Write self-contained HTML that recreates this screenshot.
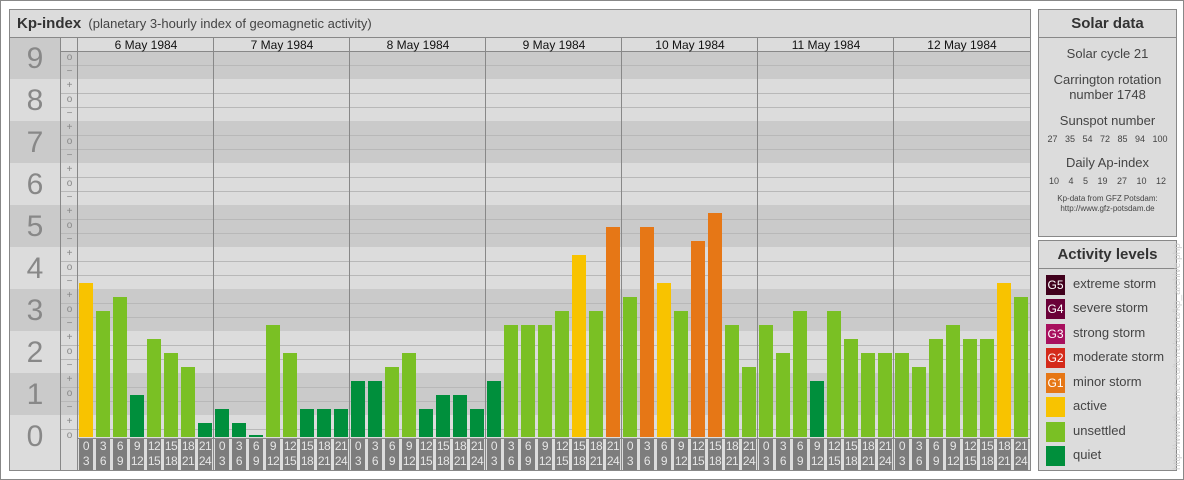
<!DOCTYPE html>
<html><head><meta charset="utf-8"><style>
body{margin:0;width:1184px;height:480px;background:#fff;font-family:"Liberation Sans",sans-serif;position:relative;overflow:hidden}
.a{position:absolute}
#frame{left:0;top:0;width:1182px;height:478px;border:1px solid #888;background:#fff}
#main{left:9px;top:9px;width:1020px;height:460px;border:1px solid #888;background:#dcdcdc;overflow:hidden}
.ttl{left:0;top:0;width:1020px;height:27px;border-bottom:1px solid #888;font-size:13px;color:#444;line-height:27px;background:#dcdcdc}
.lbl{font-size:13px;color:#888;left:0;width:50px;text-align:center;font-size:30px;line-height:42px}
.tk{left:51px;width:17px;text-align:center;font-size:10px;color:#888;line-height:14px;height:14px}
.dh{top:28px;height:14px;width:136px;text-align:center;font-size:12px;color:#111;line-height:14px}
.bx{top:429px;width:14px;height:31px;background:#7d7d7d;color:#e6e6e6;font-size:12px;line-height:15px;text-align:center;overflow:hidden;letter-spacing:-0.5px}
.panel{border:1px solid #888;background:#dcdcdc;left:1038px;width:137px}
.ph{height:27px;border-bottom:1px solid #888;text-align:center;font-weight:bold;font-size:15px;line-height:27px;color:#333}
.pt{text-align:center;color:#444;font-size:13px;white-space:nowrap}
.lv{left:7px;font-size:13px;color:#444;height:22px;line-height:22px}
.lv span{display:inline-block;width:19px;height:20px;vertical-align:middle;margin-right:8px;color:#fff;font-size:12px;text-align:center;line-height:20px}
</style></head><body>
<div class="a" id="frame"></div>
<div class="a" id="main">
<div id="bg"></div>
<div class="a ttl"><b style="font-size:15px;color:#333;margin-left:7px">Kp-index</b>&nbsp;&nbsp;<span style="font-size:13px">(planetary 3-hourly index of geomagnetic activity)</span></div>
<div class="a" style="left:51px;top:28px;width:969px;height:14px;background:#dcdcdc"></div>
<div class="a" style="left:51px;top:429px;width:969px;height:31px;background:#dcdcdc"></div>
<div class="a" style="left:50px;top:28px;width:1px;height:432px;background:#888"></div>
<div class="a" style="left:67px;top:28px;width:1px;height:432px;background:#888"></div>
<div class="a" style="left:51px;top:41px;width:969px;height:1px;background:#888"></div>
<div class="a lbl" style="top:28px">9</div><div class="a lbl" style="top:70px">8</div><div class="a lbl" style="top:112px">7</div><div class="a lbl" style="top:154px">6</div><div class="a lbl" style="top:196px">5</div><div class="a lbl" style="top:238px">4</div><div class="a lbl" style="top:280px">3</div><div class="a lbl" style="top:322px">2</div><div class="a lbl" style="top:364px">1</div><div class="a lbl" style="top:406px">0</div>
<div class="a dh" style="left:68px">6 May 1984</div><div class="a dh" style="left:204px">7 May 1984</div><div class="a dh" style="left:340px">8 May 1984</div><div class="a dh" style="left:476px">9 May 1984</div><div class="a dh" style="left:612px">10 May 1984</div><div class="a dh" style="left:748px">11 May 1984</div><div class="a dh" style="left:884px">12 May 1984</div>
<div id="bars"></div>
</div>
<div class="a panel" style="top:9px;height:226px">
<div class="ph">Solar data</div>
<div class="pt" style="margin-top:8px">Solar cycle 21</div>
<div class="pt" style="margin-top:11px;line-height:15px">Carrington rotation<br>number 1748</div>
<div class="pt" style="margin-top:11px">Sunspot number</div>
<div class="pt" style="font-size:9px;margin-top:6px;word-spacing:5px">27 35 54 72 85 94 100</div>
<div class="pt" style="margin-top:11px">Daily Ap-index</div>
<div class="pt" style="font-size:9px;margin-top:6px;word-spacing:7px">10 4 5 19 27 10 12</div>
<div class="pt" style="font-size:8px;margin-top:8px;line-height:10px">Kp-data from GFZ Potsdam:<br>http://www.gfz-potsdam.de</div>
</div>
<div class="a panel" style="top:240px;height:229px">
<div class="ph">Activity levels</div>
<div class="a lv" style="top:32px"><span style="background:#40001c">G5</span>extreme storm</div>
<div class="a lv" style="top:56px"><span style="background:#6a0038">G4</span>severe storm</div>
<div class="a lv" style="top:81px"><span style="background:#a8105e">G3</span>strong storm</div>
<div class="a lv" style="top:105px"><span style="background:#d42a1a">G2</span>moderate storm</div>
<div class="a lv" style="top:130px"><span style="background:#e67716">G1</span>minor storm</div>
<div class="a lv" style="top:154px"><span style="background:#f8c300"></span>active</div>
<div class="a lv" style="top:179px"><span style="background:#7ac024"></span>unsettled</div>
<div class="a lv" style="top:203px"><span style="background:#008f3c"></span>quiet</div>
</div>
<div class="a" style="left:1172px;top:470px;transform:rotate(-90deg);transform-origin:0 0;font-size:10px;color:#ccc;white-space:nowrap">http://www.theusner.eu/terra/aurora/kp_archive.php</div>
<script>
var h='';
for(var n=9;n>=0;n--){var y=48+(9-n)*42-21;var c=(n%2)?'#cacaca':'#dcdcdc';h+='<div class="a" style="left:0;top:'+y+'px;width:1020px;height:42px;background:'+c+'"></div>';
 [-7,7].forEach(function(d){var ly=48+(9-n)*42+d;if(ly>41&&ly<428)h+='<div class="a" style="left:51px;top:'+ly+'px;width:969px;height:1px;background:#b8b8b8"></div>';});}
document.getElementById('bg').innerHTML=h;
var v=[[11,9,10,3,7,6,5,1],[2,1,0,8,6,2,2,2],[4,4,5,6,2,3,3,2],[4,8,8,8,9,13,9,15],[10,15,11,9,14,16,8,5],[8,6,9,4,9,7,6,6],[6,5,7,8,7,7,11,10]];
var b='';
for(var d=0;d<7;d++){var x0=67+d*136;if(d>0)b+='<div class="a" style="left:'+x0+'px;top:28px;width:1px;height:432px;background:#888"></div>';
 for(var i=0;i<8;i++){var t=v[d][i],c=t<=4?'#008f3c':t<=10?'#7ac024':t<=13?'#f8c300':'#e67716';var hh=t==0?2:t*14;
 b+='<div class="a" style="left:'+(x0+2+17*i)+'px;top:'+(427-hh)+'px;width:14px;height:'+hh+'px;background:'+c+'"></div>';}}
b+='<div class="a" style="left:68px;top:428px;width:952px;height:1px;background:#888"></div>';
document.getElementById('bars').innerHTML=b;
</script>
<div class="a" style="left:0;top:0">
<script>
var s='',r=['+','o','&minus;'];
for(var n=9;n>=0;n--){for(var k=0;k<3;k++){var y=48+(9-n)*42+(k-1)*14-7+10;if(y<51||y>435)continue;s+='<div class="a tk" style="left:61px;top:'+y+'px">'+r[k]+'</div>';}}
document.write(s);
</script>
</div>
<div class="a" style="left:0;top:0">
<script>
var L=['0<br>3','3<br>6','6<br>9','9<br>12','12<br>15','15<br>18','18<br>21','21<br>24'],q='';
for(var d=0;d<7;d++)for(var i=0;i<8;i++)q+='<div class="a bx" style="left:'+(79+d*136+17*i)+'px;top:439px">'+L[i]+'</div>';
document.write(q);
</script>
</div>
</body></html>
